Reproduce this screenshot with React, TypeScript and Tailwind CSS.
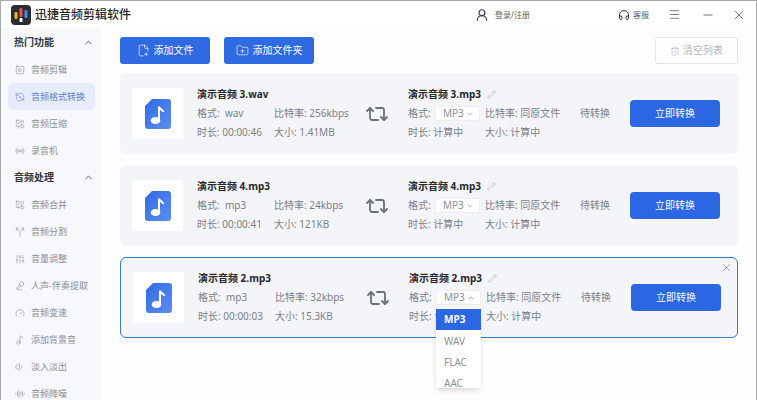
import React from 'react';
import { ChevronUp, Menu, Minus, X, Headphones, Pencil, Trash2, ChevronDown, FilePlus2, FolderPlus, Repeat2, SquarePlay, RefreshCcwDot, Combine, Radio, Split, SlidersVertical, MicVocal, Gauge, Music2, Volume1, AudioLines, UserRound } from 'lucide-react';

const NoteIcon = () => (
  <svg width="26" height="30" viewBox="0 0 26 30">
    <defs>
      <linearGradient id="note" x1="0" y1="0" x2="1" y2="1">
        <stop offset="0" stopColor="#2f6be4" />
        <stop offset="1" stopColor="#5f8cf2" />
      </linearGradient>
    </defs>
    <path d="M7 0h16a3 3 0 0 1 3 3v24a3 3 0 0 1-3 3H3a3 3 0 0 1-3-3V7z" fill="url(#note)" />
    <ellipse cx="10.5" cy="21.5" rx="4.8" ry="3.6" fill="#fff" />
    <path d="M14 21V7.5c0 2.5 4 3 4.500 5.500" fill="none" stroke="#fff" strokeWidth="2" />
  </svg>
);

const Logo = () => (
  <svg width="20" height="20" viewBox="0 0 20 20">
    <rect width="20" height="20" rx="4" fill="#2b2d33" />
    <rect x="3.500" y="7" width="3" height="7" rx="1" fill="#f0b429" />
    <rect x="8.500" y="3" width="3" height="9" rx="1" fill="#e8534a" />
    <rect x="13.500" y="5" width="3" height="8" rx="1" fill="#3d8bf2" />
    <rect x="8.500" y="13" width="3" height="4" rx="1" fill="#ffffff" />
  </svg>
);

const groups = [
  {
    title: '热门功能',
    items: [
      { label: '音频剪辑', icon: SquarePlay },
      { label: '音频格式转换', icon: RefreshCcwDot, active: true },
      { label: '音频压缩', icon: Combine },
      { label: '录音机', icon: Radio },
    ],
  },
  {
    title: '音频处理',
    items: [
      { label: '音频合并', icon: Combine },
      { label: '音频分割', icon: Split },
      { label: '音量调整', icon: SlidersVertical },
      { label: '人声-伴奏提取', icon: MicVocal },
      { label: '音频变速', icon: Gauge },
      { label: '添加背景音', icon: Music2 },
      { label: '淡入淡出', icon: Volume1 },
      { label: '音频降噪', icon: AudioLines },
    ],
  },
];

const files = [
  { source: '演示音频 3.wav', target: '演示音频 3.mp3', format: 'wav', bitrate: '256kbps', time: '00:00:46', size: '1.41MB' },
  { source: '演示音频 4.mp3', target: '演示音频 4.mp3', format: 'mp3', bitrate: '24kbps', time: '00:00:41', size: '121KB' },
  { source: '演示音频 2.mp3', target: '演示音频 2.mp3', format: 'mp3', bitrate: '32kbps', time: '00:00:03', size: '15.3KB', selected: true },
];

const FileRow = ({ file }: { file: (typeof files)[number] }) => (
  <div
    className={`relative flex items-center h-[81px] rounded-[6px] pl-[12px] bg-[#f4f5f8] ${
      file.selected ? 'border border-[#2f7bd8]' : ''
    }`}
  >
    {file.selected && <X size={11} strokeWidth={1.5} className="absolute top-[4px] right-[5px] text-[#6b7280]" />}
    <div className="flex items-center justify-center w-[51px] h-[51px] bg-white shrink-0">
      <NoteIcon />
    </div>
    <div className="ml-[14px] w-[160px] shrink-0 text-[10px] leading-[19px] text-[#7b8088]">
      <div className="text-[10px] font-bold text-[#26282c]">{file.source}</div>
      <div className="flex">
        <span className="w-[77px]">格式:&nbsp; {file.format}</span>
        <span>比特率: {file.bitrate}</span>
      </div>
      <div className="flex">
        <span className="w-[77px]">时长:&nbsp;{file.time}</span>
        <span>大小:&nbsp;{file.size}</span>
      </div>
    </div>
    <Repeat2 size={24} strokeWidth={1.8} className="ml-[8px] shrink-0 text-[#69707c]" />
    <div className="ml-[19px] w-[172px] shrink-0 text-[10px] leading-[19px] text-[#7b8088]">
      <div className="flex items-center gap-[6px] font-bold text-[#26282c]">
        {file.target}
        <Pencil size={9} strokeWidth={1.2} className="text-[#9aa0a8]" />
      </div>
      <div className="flex items-center">
        <span className="w-[27px]">格式:</span>
        <span className="relative flex items-center justify-between w-[45px] h-[15px] bg-white border border-[#eceef2] rounded-[2px] pl-[7px] pr-[5px] mr-[5px] text-[#8b9098]">
          MP3
          <ChevronDown size={8} strokeWidth={3} className={`text-[#b5b9c0] ${file.selected ? 'rotate-180' : ''}`} />
          {file.selected && (
            <span className="absolute z-10 left-[-1px] top-[18px] w-[45px] h-[79px] bg-white shadow-md leading-[21px]">
              <span className="block h-[21px] pl-[8px] bg-[#2b66e3] text-white font-bold">MP3</span>
              <span className="block h-[22px] pl-[8px] leading-[22px]">WAV</span>
              <span className="block h-[21px] pl-[8px]">FLAC</span>
              <span className="block h-[21px] pl-[8px]">AAC</span>
            </span>
          )}
        </span>
        <span>比特率: 同原文件</span>
      </div>
      <div className="flex">
        <span className="w-[77px]">时长: 计算中</span>
        <span>大小: 计算中</span>
      </div>
    </div>
    <span className="w-[50px] shrink-0 text-[10px] text-[#7b8088]">待转换</span>
    <button className="w-[90px] h-[27px] shrink-0 rounded-[4px] bg-[#2b66e3] text-white text-[10px]">立即转换</button>
  </div>
);

export default function App() {
  return (
    <div
      className="relative w-[757px] h-[400px] overflow-hidden bg-[#fdfdfe] border-t border-l border-r border-[#a8a8a8] flex flex-col"
      style={{ fontFamily: '"Noto Sans", "Noto Sans CJK SC", sans-serif' }}
    >
      <header className="flex items-center h-[27px] shrink-0 bg-white">
        <div className="ml-[10px]"><Logo /></div>
        <span className="ml-[4px] text-[12px] font-medium text-[#23252a]">迅捷音频剪辑软件</span>
        <div className="ml-auto flex items-center text-[8px] text-[#5d6169]">
          <UserRound size={14} className="text-[#3a4250] mr-[6px]" />
          <span>登录/注册</span>
          <Headphones size={12} className="ml-[88px] mr-[3px] text-[#33363c]" />
          <span>客服</span>
          <Menu size={13} strokeWidth={1.3} className="ml-[19px] text-[#44474d]" />
          <Minus size={14} strokeWidth={1.3} className="ml-[20px] text-[#44474d]" />
          <X size={14} strokeWidth={1.3} className="ml-[17px] mr-[10px] text-[#44474d]" />
        </div>
      </header>
      <div className="flex flex-1 min-h-0">
        <aside className="w-[100px] shrink-0 bg-[#f7f8fc] pl-[7px] pt-[1px]">
          {groups.map((group) => (
            <div key={group.title}>
              <div className="flex items-center h-[27px] pl-[6px] pr-[7px] text-[10px] font-bold text-[#33363c]">
                {group.title}
                <ChevronUp size={11} className="ml-auto text-[#50545b]" />
              </div>
              {group.items.map(({ label, icon: Icon, active }: { label: string; icon: typeof X; active?: boolean }) => (
                <div
                  key={label}
                  className={`flex items-center h-[27px] w-[87px] pl-[7px] rounded-[5px] text-[9px] ${
                    active ? 'bg-[#e6ecf9] text-[#5f82d6]' : 'text-[#8a8e96]'
                  }`}
                >
                  <Icon size={10} strokeWidth={1.4} className="mr-[6px] shrink-0" />
                  {label}
                </div>
              ))}
            </div>
          ))}
        </aside>
        <main className="flex-1 pl-[19px] pr-[18px] pt-[9px]">
          <div className="flex items-center h-[27px]">
            <button className="flex items-center justify-center gap-[4px] w-[90px] h-[27px] rounded-[3px] bg-[#2f6ae3] text-white text-[10px]">
              <FilePlus2 size={13} strokeWidth={1.2} />
              添加文件
            </button>
            <button className="ml-[14px] flex items-center justify-center gap-[4px] w-[90px] h-[27px] rounded-[3px] bg-[#2f6ae3] text-white text-[10px]">
              <FolderPlus size={13} strokeWidth={1.2} />
              添加文件夹
            </button>
            <button className="ml-auto flex items-center justify-center gap-[3px] w-[83px] h-[27px] rounded-[3px] border border-[#e3e5e9] text-[#b3b6bc] text-[10px]">
              <Trash2 size={10} strokeWidth={1.3} />
              清空列表
            </button>
          </div>
          <div className="mt-[9px] flex flex-col gap-[11px]">
            {files.map((file) => (
              <FileRow key={file.source} file={file} />
            ))}
          </div>
        </main>
      </div>
    </div>
  );
}
